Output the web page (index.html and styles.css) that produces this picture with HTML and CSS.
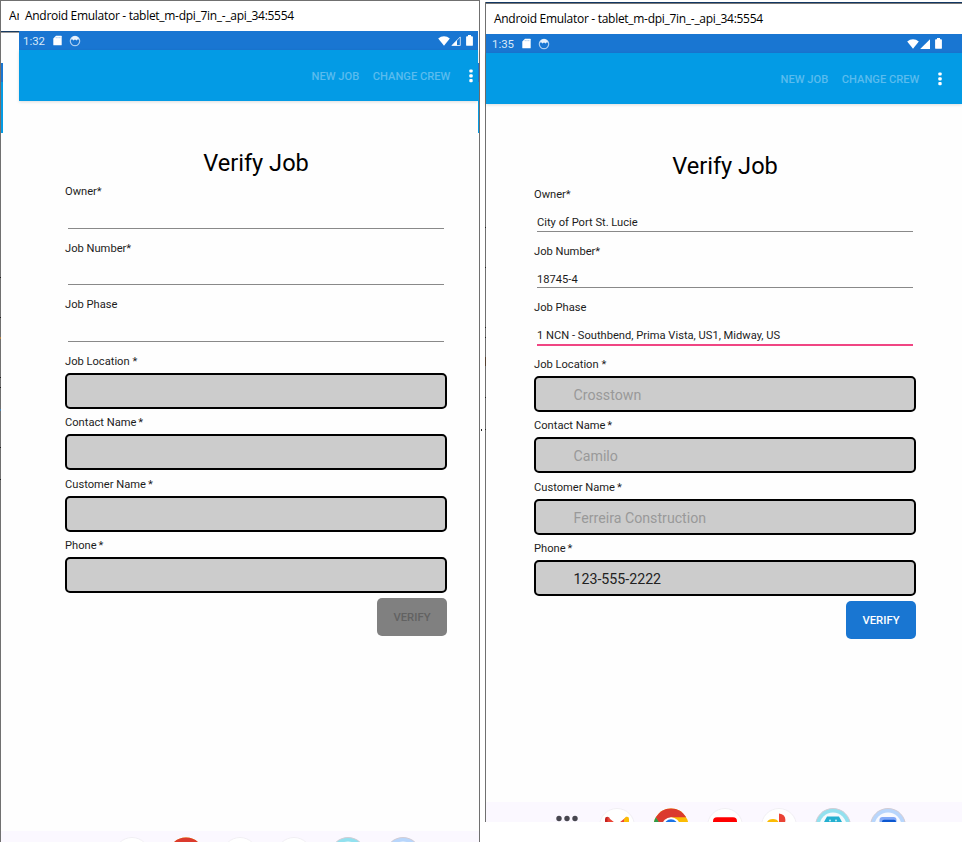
FILE: index.html
```html
<!DOCTYPE html>
<html lang="en">
<head>
<meta charset="utf-8">
<title>Android Emulator</title>
<link rel="stylesheet" href="styles.css">
</head>
<body>
<svg class="defs" width="0" height="0">
  <defs>
    <symbol id="sd" viewBox="0 0 9 11"><path d="M3 .7h5.2q.5 0 .5.5v8.6q0 .5-.5.5H.8q-.5 0-.5-.5V3.4z" fill="#fff"/><path d="M3.2 2v1.2M5 2v1.2M6.8 2v1.2" stroke="#8bbbe9" stroke-width=".8"/></symbol>
    <symbol id="face" viewBox="0 0 12 12"><circle cx="6" cy="6" r="4.7" fill="none" stroke="#a9cdf0" stroke-width="1.2"/><path d="M1.6 4.8Q2.8 1 6 1t4.4 3.8L8.8 4.2 7.7 5.4 6 4.6 4.3 5.4 3.2 4.2z" fill="#e8f2fc"/></symbol>
    <symbol id="wifi" viewBox="0 0 12 10"><path d="M6 9.8L.2 2.6Q2.8.3 6 .3t5.8 2.3z" fill="#fff"/></symbol>
    <symbol id="signal-low" viewBox="0 0 10 10"><path d="M9.3.9v8.6H.9z" fill="none" stroke="#c5dcf4" stroke-width="1"/><path d="M6 4.3v5.2H.9z" fill="#fff"/></symbol>
    <symbol id="signal" viewBox="0 0 10 10"><path d="M10 .2V10H.2z" fill="#fff"/></symbol>
    <symbol id="battery" viewBox="0 0 7 11"><path d="M2 0h3v1.2h1q.9 0 .9.9v7.8q0 .9-.9.9H1q-.9 0-.9-.9V2.1q0-.9.9-.9h1z" fill="#fff"/></symbol>
    <symbol id="more" viewBox="0 0 4 14"><g fill="#fff"><rect x=".3" y=".4" width="3.4" height="3.2" rx="1"/><rect x=".3" y="5.2" width="3.4" height="3.2" rx="1"/><rect x=".3" y="10" width="3.4" height="3.2" rx="1"/></g></symbol>
    <symbol id="dots" viewBox="0 0 36 36"><g fill="#47464f"><circle cx="10" cy="10.5" r="2.7"/><circle cx="18" cy="10.5" r="2.7"/><circle cx="26" cy="10.5" r="2.7"/></g></symbol>
    <symbol id="gmail" viewBox="0 0 36 36"><circle cx="18" cy="18" r="17.5" fill="#fff" stroke="#f1eff4"/><path d="M6 26V11q0-2.3 2.5-2.3l2 1V26z" fill="#c5221f"/><path d="M8.5 9L18 16.4 27.5 9v6L18 21 8.5 15z" fill="#ea4335"/><path d="M25 26V11l2-2.2q3-.8 3 2.2v15z" fill="#fbbc04"/></symbol>
    <symbol id="chrome" viewBox="0 0 36 36"><circle cx="18" cy="18" r="17.5" fill="#fbbc04"/><path d="M2.8 9.3A17.5 17.5 0 0 1 33.2 9.3H18L9 20z" fill="#db3a2e"/><path d="M2.8 9.3L11 22l7 13.5A17.5 17.5 0 0 1 2.8 9.3" fill="#2d9b4b"/><circle cx="18" cy="18" r="8.8" fill="#fff"/><circle cx="18" cy="18" r="6.8" fill="#1a73e8"/></symbol>
    <symbol id="youtube" viewBox="0 0 36 36"><circle cx="18" cy="18" r="17.5" fill="#fff" stroke="#f1eff4"/><rect x="6" y="9.3" width="24" height="17" rx="4" fill="red"/><path d="M15.5 14.5l6 3.5-6 3.5z" fill="#fff"/></symbol>
    <symbol id="photos" viewBox="0 0 36 36"><circle cx="18" cy="18" r="17.5" fill="#fff" stroke="#f1eff4"/><path d="M18 5.4q6.4.8 6.4 6.5T18 18z" fill="#ea4335"/><path d="M5.5 17q0-6 6.5-6t6 7H5.5z" fill="#fbbc04"/></symbol>
    <symbol id="teal" viewBox="0 0 36 36"><circle cx="18" cy="18" r="17.5" fill="#92e1ef" stroke="#d2ccd4"/><circle cx="18" cy="18" r="13.5" fill="#f5fafd"/><path d="M12 8.5h12l3 5.5v12H9V14z" fill="#24b0d0"/><circle cx="15" cy="12.5" r=".9" fill="#d6f4f9"/><circle cx="21" cy="12.5" r=".9" fill="#d6f4f9"/></symbol>
    <symbol id="blue" viewBox="0 0 36 36"><circle cx="18" cy="18" r="17.5" fill="#b8d6fc" stroke="#d2ccd4"/><circle cx="18" cy="18" r="13.5" fill="#f8faff"/><rect x="9.5" y="9" width="17" height="17" rx="3" fill="#83aaf8"/><rect x="12" y="11.8" width="14" height="15" rx="2" fill="#0b57d0"/></symbol>
  </defs>
</svg>
<main class="desktop">
  <section class="window window-left">
    <header class="titlebar"><span class="ghost">Ar</span><span class="caption">Android Emulator - tablet_m-dpi_7in_-_api_34:5554</span></header>
    <div class="frame">
      <div class="gutter"><i class="behind"></i></div>
      <div class="app">
        <div class="status"><span class="time">1:32</span><svg class="sd"><use href="#sd"/></svg><svg class="face"><use href="#face"/></svg><span class="fill"></span><svg class="wifi"><use href="#wifi"/></svg><svg class="signal"><use href="#signal-low"/></svg><svg class="battery"><use href="#battery"/></svg></div>
        <nav class="toolbar"><span class="new">NEW JOB</span><span class="crew">CHANGE CREW</span><svg class="more"><use href="#more"/></svg></nav>
        <form class="form">
          <h1>Verify Job</h1>
          <div class="line-field"><label>Owner*</label><div class="line"></div></div>
          <div class="line-field"><label>Job Number*</label><div class="line"></div></div>
          <div class="line-field"><label>Job Phase</label><div class="line"></div></div>
          <div class="box-field"><label>Job Location *</label><div class="box"></div></div>
          <div class="box-field"><label>Contact Name<b> *</b></label><div class="box"></div></div>
          <div class="box-field"><label>Customer Name<b> *</b></label><div class="box"></div></div>
          <div class="box-field"><label>Phone<b> *</b></label><div class="box"></div></div>
          <button type="button" class="verify off">VERIFY</button>
        </form>
      </div>
      <div class="edge"><i class="behind"></i></div>
    </div>
    <footer class="dock"><svg><use href="#dots"/></svg><svg><use href="#gmail"/></svg><svg><use href="#chrome"/></svg><svg><use href="#youtube"/></svg><svg><use href="#photos"/></svg><svg><use href="#teal"/></svg><svg><use href="#blue"/></svg></footer>
  </section>
  <section class="window window-right">
    <header class="titlebar"><span class="caption">Android Emulator - tablet_m-dpi_7in_-_api_34:5554</span></header>
    <div class="frame">
      <div class="app">
        <div class="status"><span class="time">1:35</span><svg class="sd"><use href="#sd"/></svg><svg class="face"><use href="#face"/></svg><span class="fill"></span><svg class="wifi"><use href="#wifi"/></svg><svg class="signal"><use href="#signal"/></svg><svg class="battery"><use href="#battery"/></svg></div>
        <nav class="toolbar"><span class="new">NEW JOB</span><span class="crew">CHANGE CREW</span><svg class="more"><use href="#more"/></svg></nav>
        <form class="form">
          <h1>Verify Job</h1>
          <div class="line-field"><label>Owner*</label><div class="line">City of Port St. Lucie</div></div>
          <div class="line-field"><label>Job Number*</label><div class="line">18745-4</div></div>
          <div class="line-field"><label>Job Phase</label><div class="line focus">1 NCN - Southbend, Prima Vista, US1, Midway, US</div></div>
          <div class="box-field"><label>Job Location *</label><div class="box">Crosstown</div></div>
          <div class="box-field"><label>Contact Name<b> *</b></label><div class="box">Camilo</div></div>
          <div class="box-field"><label>Customer Name<b> *</b></label><div class="box">Ferreira Construction</div></div>
          <div class="box-field"><label>Phone<b> *</b></label><div class="box entered">123-555-2222</div></div>
          <button type="button" class="verify">VERIFY</button>
        </form>
      </div>
    </div>
    <footer class="dock"><svg><use href="#dots"/></svg><svg><use href="#gmail"/></svg><svg><use href="#chrome"/></svg><svg><use href="#youtube"/></svg><svg><use href="#photos"/></svg><svg><use href="#teal"/></svg><svg><use href="#blue"/></svg></footer>
  </section>
</main>
</body>
</html>
```
FILE: styles.css
```css
* { box-sizing: border-box; }
body { margin: 0; background: #fff; font-family: Roboto, sans-serif; color: #1c1c1c; }
.defs { position: absolute; }
.desktop {
  display: flex; gap: 5px; width: 962px; height: 842px; overflow: hidden;
  background: linear-gradient(#222, #222) 481px 429px / 1px 2px no-repeat;
}
.window { position: relative; display: flex; flex-direction: column; background: #fefefe; background-clip: padding-box; }
.window-left { width: 480px; height: 842px; border: 1px solid #707070; border-bottom: 0; }
.window-right { width: 477px; height: 820px; margin-top: 2px; border-left: 1px solid #707070; }
/* dark ticks of the desktop showing along the window borders */
.window::before {
  content: ""; position: absolute; z-index: 1; left: -1px; top: 276px; width: 1px; height: 204px;
  background: linear-gradient(#222 0 1px, transparent 1px 40px, #222 40px 41px, transparent 41px 60px, #b98545 60px 62px, transparent 62px 100px, #222 100px 101px, transparent 101px 110px, #222 110px 111px, transparent 111px 132px, #4586b4 132px 134px, transparent 134px 170px, #222 170px 171px, transparent 171px 202px, #222 202px 203px, transparent 203px);
}
.window-right::before {
  top: 225px;
  background: linear-gradient(#222 0 1px, transparent 1px 40px, #222 40px 41px, transparent 41px 100px, #222 100px 101px, transparent 101px 110px, #222 110px 111px, transparent 111px 130px, #55402f 130px 139px, transparent 139px 170px, #222 170px 171px, transparent 171px 202px, #222 202px 203px, transparent 203px);
}
.titlebar { display: flex; flex: none; align-items: center; height: 30px; background: #fff; color: #000; font: 12px/30px "Open Sans", sans-serif; white-space: nowrap; }
.window-left .titlebar { padding-left: 8px; }
.window-right .titlebar { height: 32px; padding: 1px 0 0 8px; border-top: 1px solid #123763; box-shadow: inset 0 1px #777; }
.ghost { width: 10px; margin-right: 6px; overflow: hidden; }
.caption { letter-spacing: -.29px; }
.frame { display: flex; flex: 1; min-height: 0; }
.gutter { width: 18px; border-top: 1px solid #173a60; box-shadow: inset 0 1px #999; }
.edge { width: 1px; padding-top: 1px; overflow: hidden; }
.behind { display: block; width: 2px; height: 70px; margin-top: 31px; background: linear-gradient(#1976d2 19px, #039be5 19px); }
.app { flex: 1; min-width: 0; }
.status { display: flex; align-items: center; height: 19px; padding: 0 5px 0 4px; background: #1976d2; color: #d9e9f8; font-size: 11.4px; }
.window-right .status { padding: 0 20px 0 6px; }
.time { width: 30px; }
.fill { flex: 1; }
.sd { width: 9px; height: 11px; margin-right: 7px; }
.face { width: 12px; height: 12px; }
.wifi { width: 12px; height: 10px; margin-right: 1px; }
.signal { width: 10px; height: 10px; margin-right: 5px; }
.battery { width: 7px; height: 11px; }
.toolbar { display: flex; align-items: center; justify-content: flex-end; height: 51px; padding-right: 5px; background: #039be5; box-shadow: 0 1px 3px #0002; color: #5abcee; font-size: 11.15px; line-height: 15px; font-weight: 500; }
.toolbar span { padding-top: 1px; }
.window-right .toolbar { padding-right: 20px; }
.new { margin-right: 13.6px; }
.crew { margin-right: 18.6px; }
.more { width: 4px; height: 14px; }
.form { width: 382px; margin: 46px 0 0 46px; }
.window-right .form { margin-left: 48px; }
h1 { height: 34px; margin: 0; font-size: 23.6px; line-height: 33px; font-weight: 400; text-align: center; color: #000; }
label { display: block; height: 20px; padding-top: 1.4px; font-size: 11.15px; line-height: 20px; white-space: pre; }
label b { margin-left: -.8px; font-weight: 400; }
.line-field { height: 56.4px; }
.line { height: 28px; margin: 0 3px; padding-top: 9.4px; border-bottom: 1px solid #898989; font-size: 11.15px; line-height: 20px; white-space: nowrap; }
.line.focus { border-bottom: 2px solid #f04583; height: 29px; }
.box-field { height: 61.3px; }
.box-field label { padding-top: 1.8px; }
.box { height: 36px; margin-top: 3px; padding-left: 37.5px; border: 2px solid #000; border-radius: 5px; background: #ccc; color: #999; font-size: 14.2px; line-height: 34px; }
.box.entered { color: #222; }
.verify { display: block; width: 70px; height: 38px; margin: 3px 0 0 auto; padding: 1px 0 0; border: 0; border-radius: 5px; background: #1976d2; color: #fff; font: 500 11.3px Roboto, sans-serif; }
.verify.off { background: #808080; color: #626262; }
.dock { display: flex; flex: none; gap: 18.1px; height: 11px; padding: 6px 0 0 63px; overflow: hidden; background: #fbf8ff; }
.window-right .dock { height: 20px; }
.dock svg { flex: none; width: 36px; height: 36px; }
.dock svg:first-child { margin-right: -4px; }
.window-left .dock svg:first-child { visibility: hidden; }
```
